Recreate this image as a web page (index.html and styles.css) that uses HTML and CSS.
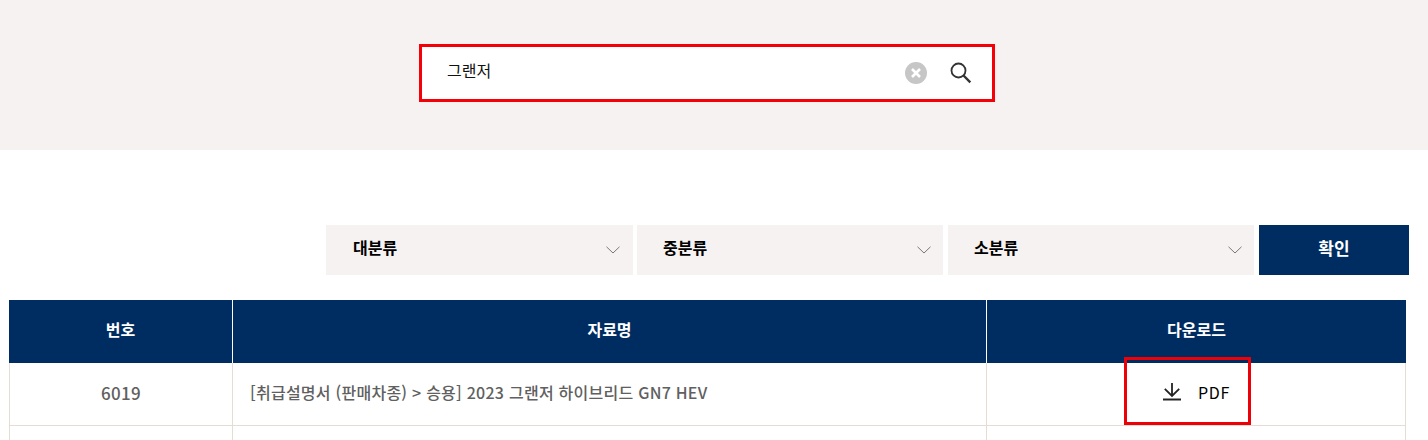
FILE: index.html
```html
<!DOCTYPE html>
<html lang="ko">
<head>
<meta charset="utf-8">
<title>자료실</title>
<link rel="stylesheet" href="styles.css">
</head>
<body>
<section class="search-band">
  <div class="search-box">
    <span class="search-text">그랜저</span>
    <svg class="icon-clear" width="22" height="22" viewBox="0 0 22 22"><circle cx="11" cy="11" r="11" fill="#c6c6c6"/><path d="M7 7l8 8M15 7l-8 8" stroke="#fff" stroke-width="2.600" fill="none"/></svg>
    <svg class="icon-search" width="22" height="22" viewBox="0 0 22 22"><circle cx="8.500" cy="8.500" r="7" stroke="#333" stroke-width="1.800" fill="none"/><path d="M13.500 13.500l6.800 6.800" stroke="#333" stroke-width="2.400" fill="none"/></svg>
  </div>
</section>
<section class="filters">
  <div class="select"><span>대분류</span><svg width="14" height="8" viewBox="0 0 14 8"><path d="M.5.8L7 7l6.500-6.200" stroke="#777" fill="none"/></svg></div>
  <div class="select"><span>중분류</span><svg width="14" height="8" viewBox="0 0 14 8"><path d="M.5.8L7 7l6.500-6.200" stroke="#777" fill="none"/></svg></div>
  <div class="select"><span>소분류</span><svg width="14" height="8" viewBox="0 0 14 8"><path d="M.5.8L7 7l6.500-6.200" stroke="#777" fill="none"/></svg></div>
  <div class="confirm"><span>확인</span></div>
</section>
<table class="data">
  <colgroup><col class="c-num"><col class="c-name"><col class="c-down"></colgroup>
  <thead>
    <tr><th>번호</th><th>자료명</th><th>다운로드</th></tr>
  </thead>
  <tbody>
    <tr>
      <td class="num">6019</td>
      <td class="name">[취급설명서 (판매차종) &gt; 승용] 2023 그랜저 하이브리드 GN7 HEV</td>
      <td class="down">
        <span class="pdf">
          <svg width="20" height="18" viewBox="0 0 20 18"><path d="M10 0v13M2.800 5.800L10 13l7.200-7.200" stroke="#222" stroke-width="1.800" fill="none"/><path d="M1 16.500h18" stroke="#222" stroke-width="2" fill="none"/></svg>
          <span>PDF</span>
          <i class="mark"></i>
        </span>
      </td>
    </tr>
    <tr class="empty"><td></td><td></td><td></td></tr>
  </tbody>
</table>
</body>
</html>
```
FILE: styles.css
```css
html, body { margin: 0; padding: 0; height: 440px; overflow: hidden; background: #fff; }
body { font-family: "Noto Sans CJK KR", "Noto Sans", sans-serif; color: #000; }

.search-band { height: 150px; background: #f6f2f1; display: flex; justify-content: flex-start; box-sizing: border-box; padding: 44px 0 0 419px; }
.search-box { width: 576px; height: 58px; box-sizing: border-box; border: 3px solid #f40009; background: #fff; display: flex; align-items: center; padding: 0 20px 0 25px; }
.search-text { flex: 1; font-size: 16px; color: #111; padding-bottom: 6px; }
.icon-clear { margin-right: 23px; }

.filters { display: flex; justify-content: flex-end; gap: 5px; margin-top: 75px; padding-right: 19px; }
.select { width: 306px; height: 50px; box-sizing: border-box; padding: 0 12px 0 26px; background: #f6f2f1; display: flex; align-items: center; justify-content: space-between; font-size: 16px; font-weight: 700; }
.select span { padding-bottom: 6px; }
.select:first-child { width: 307px; margin-right: -1px; padding: 0 13px 0 27px; }
.confirm { width: 150px; height: 50px; background: #002d61; color: #fff; display: flex; align-items: center; justify-content: center; font-size: 17px; font-weight: 700; }
.confirm span { padding-bottom: 6px; }

.data { width: 1397px; margin: 25px 0 0 9px; border-collapse: separate; border-spacing: 0; table-layout: fixed; }
.c-num { width: 223px; }
.c-name { width: 754px; }
.c-down { width: 420px; }
.data th { height: 63px; padding: 0 0 6px; box-sizing: border-box; background: #002d61; color: #fff; font-size: 16px; font-weight: 700; text-align: center; border-left: 1px solid #fff; }
.data th:first-child { border-left: 0; }
.data td { height: 63px; padding: 0 0 4px; box-sizing: border-box; border-left: 1px solid #e5dcd3; border-bottom: 1px solid #e5dcd3; font-size: 16px; font-weight: 500; color: #606060; text-align: center; letter-spacing: .25px; }
.data td:last-child { border-right: 1px solid #e5dcd3; }
.data td.num { font-size: 17px; }
.data td.name { text-align: left; padding-left: 17px; }
.empty td { border-bottom: 0; }
.pdf { position: relative; display: inline-flex; align-items: center; gap: 16px; color: #000; font-size: 16px; font-weight: 400; letter-spacing: .6px; top: 1px; }
.mark { position: absolute; left: -38px; top: -23px; width: 127px; height: 68px; box-sizing: border-box; border: 3px solid #ee0009; }
```
